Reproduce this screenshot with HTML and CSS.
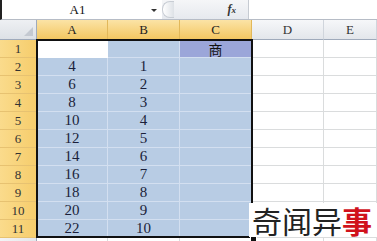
FILE: index.html
```html
<!DOCTYPE html>
<html>
<head>
<meta charset="utf-8">
<link rel="stylesheet" href="styles.css">
</head>
<body>
<div class="app">
  <div class="fbar">
    <div class="namebox"><span class="name">A1</span><span class="arrow"></span></div>
    <div class="fbtns"><span class="knob"></span><span class="fx">f<small>x</small></span></div>
    <div class="finput"></div>
  </div>
  <div class="sheet">
    <div class="grid">
      <div class="corner"><span class="tri"></span></div>
      <div class="ch sel">A</div><div class="ch sel">B</div><div class="ch sel">C</div><div class="ch">D</div><div class="ch">E</div>

      <div class="rh">1</div><div class="c active"></div><div class="c s"></div><div class="c s dk">商</div><div class="c"></div><div class="c"></div>
      <div class="rh">2</div><div class="c s">4</div><div class="c s">1</div><div class="c s"></div><div class="c"></div><div class="c"></div>
      <div class="rh">3</div><div class="c s">6</div><div class="c s">2</div><div class="c s"></div><div class="c"></div><div class="c"></div>
      <div class="rh">4</div><div class="c s">8</div><div class="c s">3</div><div class="c s"></div><div class="c"></div><div class="c"></div>
      <div class="rh">5</div><div class="c s">10</div><div class="c s">4</div><div class="c s"></div><div class="c"></div><div class="c"></div>
      <div class="rh">6</div><div class="c s">12</div><div class="c s">5</div><div class="c s"></div><div class="c"></div><div class="c"></div>
      <div class="rh">7</div><div class="c s">14</div><div class="c s">6</div><div class="c s"></div><div class="c"></div><div class="c"></div>
      <div class="rh">8</div><div class="c s">16</div><div class="c s">7</div><div class="c s"></div><div class="c"></div><div class="c"></div>
      <div class="rh">9</div><div class="c s">18</div><div class="c s">8</div><div class="c s"></div><div class="c"></div><div class="c"></div>
      <div class="rh">10</div><div class="c s">20</div><div class="c s">9</div><div class="c s"></div><div class="c"></div><div class="c"></div>
      <div class="rh">11</div><div class="c s">22</div><div class="c s">10</div><div class="c s"></div><div class="c"></div><div class="c"></div>
      <div class="rh plain"></div><div class="c"></div><div class="c"></div><div class="c"></div><div class="c"></div><div class="c"></div>
    </div>
    <div class="selbox"></div>
    <div class="handle"></div>
    <div class="wm">奇闻异<span class="red">事</span></div>
  </div>
</div>
</body>
</html>
```
FILE: styles.css
```css
html, body { margin: 0; padding: 0; background: #fff; }
body { width: 377px; height: 241px; overflow: hidden; font-family: "Liberation Serif", "Noto Sans CJK SC", serif; }
.app { width: 377px; height: 241px; display: flex; flex-direction: column; }

.fbar { height: 19px; display: flex; border-left: 2px solid #222; border-bottom: 1px solid #b6bcc6; background: #fff; }
.namebox { width: 160px; display: flex; align-items: center; position: relative; }
.name { flex: 1; text-align: center; font-size: 13px; color: #111; padding-left: 2px; }
.arrow { width: 0; height: 0; border-left: 3px solid transparent; border-right: 3px solid transparent; border-top: 3px solid #333; margin-right: 5px; margin-top: 2px; }
.fbtns { width: 86px; background: linear-gradient(#f5f6f8, #e6e9ee); display: flex; align-items: center; justify-content: flex-end; position: relative; }
.knob { position: absolute; left: 0; top: 1px; width: 12px; height: 17px; border-radius: 8px 0 0 8px; background: linear-gradient(90deg, #fff, #dde1e6); border: 1px solid #c8cdd4; border-right: none; box-sizing: border-box; }
.fx { font-style: italic; font-weight: bold; font-size: 12px; color: #333; margin-right: 12px; }
.fx small { font-size: 9px; }
.finput { flex: 1; background: #fff; border-left: 1px solid #c6cbd2; }

.sheet { position: relative; flex: 1; overflow: hidden; }
.grid { display: grid; grid-template-columns: 37px 71px 72px 72px 72px 53px; grid-template-rows: 20px repeat(11, 18px) 18px; }

.corner { background: linear-gradient(#eef0f3, #dde1e6); border-right: 1px solid #9faabb; border-bottom: 1px solid #9faabb; box-sizing: border-box; position: relative; }
.tri { position: absolute; right: 3px; bottom: 3px; width: 0; height: 0; border-left: 9px solid transparent; border-bottom: 9px solid #c4c9d1; }
.ch { background: linear-gradient(#f6f7f9, #e3e6eb); border-right: 1px solid #d0d5dc; border-bottom: 1px solid #9faabb; box-sizing: border-box; font-size: 13px; color: #333; display: flex; align-items: center; justify-content: center; }
.ch.sel { background: linear-gradient(#fbe3a6, #f3c761); border-right: 1px solid #e2b85a; border-bottom: 1px solid #c29b47; color: #222; }
.rh { background: linear-gradient(90deg, #fadb8c, #f6cd6c); border-right: 1px solid #c29b47; border-bottom: 1px solid #e7c271; box-sizing: border-box; font-size: 13px; color: #333; display: flex; align-items: center; justify-content: center; }
.rh.plain { background: linear-gradient(90deg, #f3f4f6, #e4e7eb); border-right: 1px solid #9faabb; border-bottom: none; }

.c { border-right: 1px solid #dadcdd; border-bottom: 1px solid #dadcdd; box-sizing: border-box; font-size: 15px; color: #1b1f3a; display: flex; align-items: center; justify-content: center; }
.c.s { background: #b8cce4; border-right-color: #d3dff0; border-bottom-color: #d3dff0; }
.c.dk { background: #9ba6d9; font-family: "Noto Sans CJK SC", sans-serif; font-size: 14px; color: #111; }
.c.active { background: #fff; border-right-color: #fff; border-bottom-color: #fff; }

.selbox { position: absolute; left: 36px; top: 19px; width: 217px; height: 199px; border: 2px solid #111; box-sizing: border-box; pointer-events: none; }
.handle { position: absolute; left: 250px; top: 215px; width: 5px; height: 5px; background: #111; border: 1px solid #fff; }

.wm { position: absolute; left: 249px; top: 183px; width: 128px; height: 34px; background: #fff; font-family: "Noto Sans CJK SC", sans-serif; font-size: 30px; line-height: 34px; color: #222; padding-left: 3px; box-sizing: border-box; white-space: nowrap; }
.red { color: #d0121b; font-weight: bold; }
```
